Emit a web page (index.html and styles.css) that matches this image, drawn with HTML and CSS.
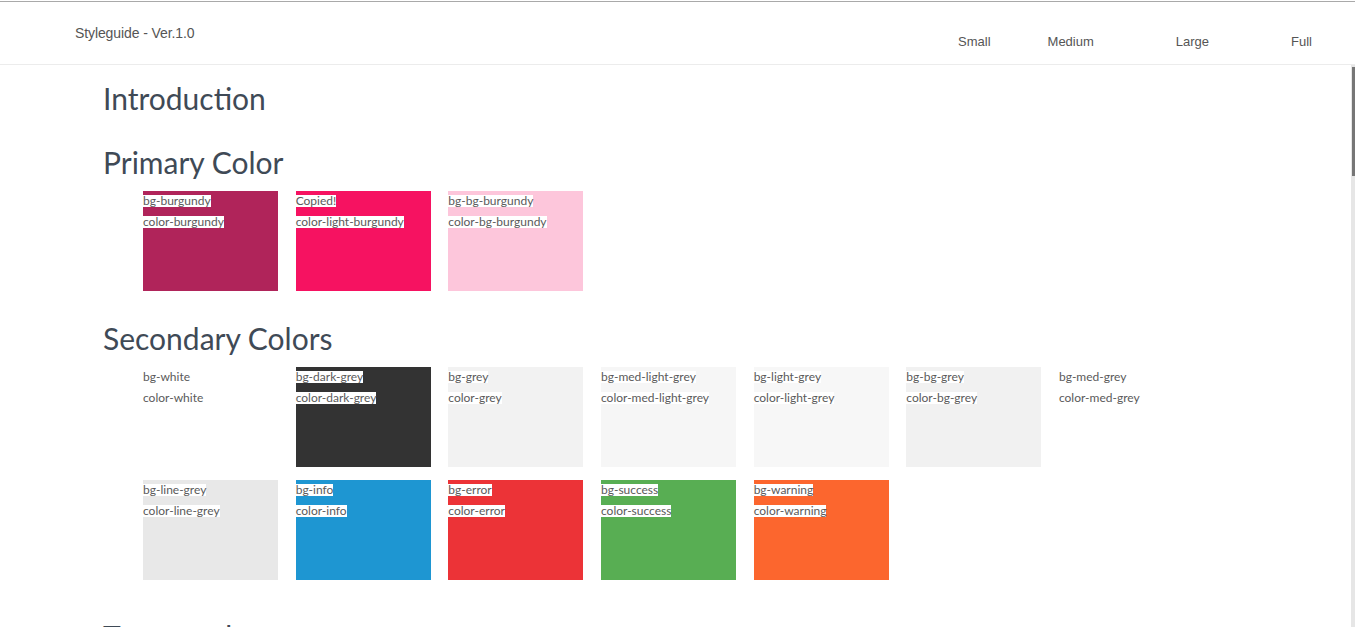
FILE: index.html
```html
<!DOCTYPE html>
<html lang="en">
<head>
<meta charset="utf-8">
<title>Styleguide - Ver.1.0</title>
<link rel="stylesheet" href="styles.css">
</head>
<body>
<header class="header">
  <div class="brand">Styleguide - Ver.1.0</div>
  <nav class="nav">
    <a class="nav-item">Small</a>
    <a class="nav-item">Medium</a>
    <a class="nav-item">Large</a>
    <a class="nav-item">Full</a>
  </nav>
</header>
<main class="main">
  <div class="content">
    <section class="section section-intro">
      <h2 class="heading">Introduction</h2>
    </section>

    <section class="section">
      <h2 class="heading">Primary Color</h2>
      <ul class="swatches">
        <li class="swatch bg-burgundy"><span class="label">bg-burgundy</span><span class="label">color-burgundy</span></li>
        <li class="swatch bg-light-burgundy"><span class="label">Copied!</span><span class="label">color-light-burgundy</span></li>
        <li class="swatch bg-bg-burgundy"><span class="label">bg-bg-burgundy</span><span class="label">color-bg-burgundy</span></li>
      </ul>
    </section>

    <section class="section">
      <h2 class="heading">Secondary Colors</h2>
      <ul class="swatches">
        <li class="swatch bg-white"><span class="label">bg-white</span><span class="label">color-white</span></li>
        <li class="swatch bg-dark-grey"><span class="label">bg-dark-grey</span><span class="label">color-dark-grey</span></li>
        <li class="swatch bg-grey"><span class="label">bg-grey</span><span class="label">color-grey</span></li>
        <li class="swatch bg-med-light-grey"><span class="label">bg-med-light-grey</span><span class="label">color-med-light-grey</span></li>
        <li class="swatch bg-light-grey"><span class="label">bg-light-grey</span><span class="label">color-light-grey</span></li>
        <li class="swatch bg-bg-grey"><span class="label">bg-bg-grey</span><span class="label">color-bg-grey</span></li>
        <li class="swatch bg-med-grey"><span class="label">bg-med-grey</span><span class="label">color-med-grey</span></li>
        <li class="swatch bg-line-grey"><span class="label">bg-line-grey</span><span class="label">color-line-grey</span></li>
        <li class="swatch bg-info"><span class="label">bg-info</span><span class="label">color-info</span></li>
        <li class="swatch bg-error"><span class="label">bg-error</span><span class="label">color-error</span></li>
        <li class="swatch bg-success"><span class="label">bg-success</span><span class="label">color-success</span></li>
        <li class="swatch bg-warning"><span class="label">bg-warning</span><span class="label">color-warning</span></li>
      </ul>
    </section>

    <section class="section section-typography">
      <h2 class="heading">Typography</h2>
      <div class="typography-body"></div>
    </section>
  </div>
</main>
<div class="scrollbar"><div class="scrollbar-thumb"></div></div>
</body>
</html>
```
FILE: styles.css
```css
html, body {
  margin: 0;
  padding: 0;
  height: 100%;
  overflow: hidden;
  background: #fff;
}

body {
  padding-top: 1px;
  box-sizing: border-box;
  display: flex;
  flex-direction: column;
  font-family: "Liberation Sans", Arial, sans-serif;
}

.header {
  flex: none;
  height: 62px;
  border-top: 1px solid #a9a9a9;
  border-bottom: 1px solid #ececec;
  display: flex;
  align-items: flex-start;
  padding-left: 75px;
  padding-right: 43px;
  color: #555;
}

.brand {
  font-size: 14px;
  line-height: 16px;
  margin-top: 23px;
  letter-spacing: -0.1px;
}

.nav {
  margin-left: auto;
  display: flex;
  gap: 83px;
  margin-top: 32px;
}

.nav-item {
  font-size: 13px;
  line-height: 15px;
  color: #555;
  text-decoration: none;
}

.nav-item:first-child {
  margin-right: -26px;
}

.nav-item:nth-child(2) {
  margin-right: -1px;
}

.nav-item:nth-child(3) {
  margin-right: -1px;
}

.main {
  flex: 1;
  overflow-y: scroll;
}

.main::-webkit-scrollbar {
  width: 4px;
}

.content {
  padding: 15px 103px 0 103px;
  font-family: Lato, "Open Sans", sans-serif;
}

.section {
  margin-bottom: 29px;
}

.heading {
  margin: 0 0 11px 0;
  font-family: Lato, sans-serif;
  font-weight: 400;
  font-size: 30px;
  line-height: 36px;
  color: #3f4a56;
}

.section-intro .heading {
  margin-bottom: 0;
}

.section-intro {
  margin-bottom: 28px;
}

.swatches {
  list-style: none;
  margin: 0;
  padding: 0 0 0 40px;
  display: flex;
  flex-wrap: wrap;
  column-gap: 17.67px;
  row-gap: 13px;
}

.swatch {
  width: 135px;
  height: 100px;
  box-sizing: border-box;
  padding-top: 4px;
  display: flex;
  flex-direction: column;
  align-items: flex-start;
  gap: 9px;
}

.label {
  display: inline-block;
  height: 12px;
  font-size: 12px;
  line-height: 12px;
  color: #5a5a5a;
  background: #fff;
  white-space: nowrap;
}

.section-typography {
  margin-top: 38px;
}

.typography-body {
  height: 2200px;
}

.scrollbar {
  position: fixed;
  top: 65px;
  right: 0;
  bottom: 0;
  width: 4px;
  background: #e6e6e6;
}

.scrollbar-thumb {
  margin: 2px 0 0 1px;
  height: 109px;
  background: #767676;
}

.bg-burgundy { background: #b0245a; }
.bg-light-burgundy { background: #f61261; }
.bg-bg-burgundy { background: #fdc6db; }
.bg-white { background: #fff; }
.bg-dark-grey { background: #333333; }
.bg-grey { background: #f2f2f2; }
.bg-med-light-grey { background: #f6f6f6; }
.bg-light-grey { background: #f7f7f7; }
.bg-bg-grey { background: #f1f1f1; }
.bg-med-grey { background: #fff; }
.bg-line-grey { background: #e8e8e8; }
.bg-info { background: #1e96d2; }
.bg-error { background: #ec3337; }
.bg-success { background: #58ae53; }
.bg-warning { background: #fc662e; }
```
